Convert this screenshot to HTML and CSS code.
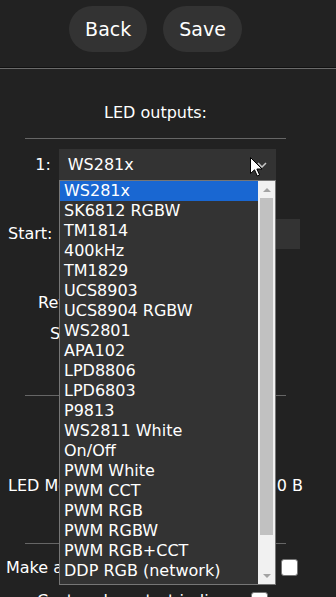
FILE: index.html
```html
<!DOCTYPE html>
<html lang="en">
<head>
    <meta charset="UTF-8">
    <meta name="viewport" content="width=device-width, initial-scale=1.0">
    <title>LED Settings</title>
    <link rel="stylesheet" href="styles.css">
</head>
<body>
    <div class="toprow">
        <div class="bar">
            <button class="btn">Back</button>
            <button class="btn">Save</button>
        </div>
    </div>

    <div class="page">
        <div class="title">LED outputs:</div>
        <hr>
        <div class="bus">
            <span class="num">1:</span>
            <div class="select">
                <span>WS281x</span>
                <svg class="chev" width="10" height="6" viewBox="0 0 10 6">
                    <polyline points="1,1 5,5 9,1" fill="none" stroke="#c8c8c8" stroke-width="1.5"/>
                </svg>
                <svg class="cursor" width="13" height="20" viewBox="0 0 13 20">
                    <path d="M0.5 0.5 L0.5 16.5 L4.5 12.8 L7.3 19 L9.6 18 L6.9 12 L12 12 Z" fill="#fff" stroke="#000" stroke-width="1"/>
                </svg>
            </div>

            <div class="popup">
                <div class="options">
                    <div class="opt active">WS281x</div>
                    <div class="opt">SK6812 RGBW</div>
                    <div class="opt">TM1814</div>
                    <div class="opt">400kHz</div>
                    <div class="opt">TM1829</div>
                    <div class="opt">UCS8903</div>
                    <div class="opt">UCS8904 RGBW</div>
                    <div class="opt">WS2801</div>
                    <div class="opt">APA102</div>
                    <div class="opt">LPD8806</div>
                    <div class="opt">LPD6803</div>
                    <div class="opt">P9813</div>
                    <div class="opt">WS2811 White</div>
                    <div class="opt">On/Off</div>
                    <div class="opt">PWM White</div>
                    <div class="opt">PWM CCT</div>
                    <div class="opt">PWM RGB</div>
                    <div class="opt">PWM RGBW</div>
                    <div class="opt">PWM RGB+CCT</div>
                    <div class="opt">DDP RGB (network)</div>
                </div>
                <div class="scroll">
                    <div class="arrow up"></div>
                    <div class="thumb"></div>
                    <div class="track"></div>
                    <div class="arrow down"></div>
                </div>
            </div>
        </div>

        <div class="start">
            <span>Start:</span>
            <div class="field"></div>
        </div>
        <div class="rev">Reversed:</div>
        <div class="skip">Skip first LEDs:</div>
        <hr class="hr2">
        <div class="mem">
            <span>LED Memory Usage:</span>
            <span>630 B</span>
        </div>
        <hr class="hr3">
        <div class="seg">
            <span>Make a segment for each output:</span>
            <div class="check"></div>
        </div>
        <div class="custom">
            <span>Custom bus start indices:</span>
            <div class="check"></div>
        </div>
    </div>
</body>
</html>
```

FILE: styles.css
```css
body {
    font-family: "DejaVu Sans", Verdana, sans-serif;
    font-size: 16px;
    line-height: 20px;
    background-color: #222;
    color: #fff;
    margin: 0;
    padding: 0;
    overflow: hidden;
}

.toprow {
    position: fixed;
    top: 0;
    left: 0;
    right: 0;
    height: 68px;
    background-color: #222;
    border-bottom: 1px solid #6a6a6a;
    box-shadow: inset 0 -1px 0 #111;
    z-index: 2;
}

.bar {
    width: 311px;
    padding-top: 6px;
    display: flex;
    justify-content: center;
}

.btn {
    font-family: "DejaVu Sans", Verdana, sans-serif;
    font-size: 19px;
    height: 46px;
    padding: 0 16px;
    margin: 0 8px;
    background-color: #333;
    color: #fff;
    border: none;
    border-radius: 23px;
}

.page {
    width: 311px;
    padding-top: 103px;
}

.title {
    text-align: center;
}

hr {
    width: 261px;
    height: 0;
    border: none;
    border-top: 1px solid #666;
    margin: 15px auto 10px;
}

.bus {
    position: relative;
    display: flex;
    justify-content: center;
    align-items: center;
    gap: 8px;
    height: 31px;
}

.select {
    position: relative;
    width: 208px;
    height: 31px;
    padding-left: 9px;
    background-color: #333;
    display: flex;
    align-items: center;
}

.chev {
    position: absolute;
    right: 9px;
    top: 13px;
}

.cursor {
    position: absolute;
    left: 191px;
    top: 8px;
}

.popup {
    position: absolute;
    left: 59px;
    top: 31px;
    width: 215px;
    height: 403px;
    border: 1px solid #767676;
    background-color: #333;
    display: flex;
    z-index: 1;
}

.options {
    flex: 1;
}

.opt {
    height: 20px;
    padding-left: 4px;
    white-space: nowrap;
}

.opt.active {
    background-color: #1967d2;
}

.scroll {
    width: 17px;
    background-color: #f1f1f1;
    display: flex;
    flex-direction: column;
}

.arrow {
    height: 17px;
    display: flex;
    justify-content: center;
    align-items: center;
}

.arrow::after {
    content: "";
    border-left: 4px solid transparent;
    border-right: 4px solid transparent;
}

.arrow.up::after {
    border-bottom: 4px solid #a3a3a3;
}

.arrow.down::after {
    border-top: 4px solid #a3a3a3;
}

.thumb {
    height: 337px;
    margin: 0 2px;
    background-color: #c1c1c1;
}

.track {
    flex: 1;
}

.start {
    display: flex;
    align-items: center;
    height: 30px;
    margin-top: 39px;
    padding-left: 8px;
}

.field {
    width: 120px;
    height: 30px;
    margin-left: auto;
    margin-right: 11px;
    background-color: #333;
}

.rev {
    margin-top: 44px;
    padding-left: 38px;
}

.skip {
    margin-top: 11px;
    padding-left: 50px;
}

.hr2 {
    margin: 51px auto 0;
}

.mem {
    display: flex;
    justify-content: space-between;
    margin-top: 80px;
    padding: 0 8px 0 8px;
}

.hr3 {
    margin: 47px auto 0;
}

.seg {
    display: flex;
    align-items: center;
    height: 19px;
    margin-top: 14px;
    padding: 0 13px 0 6px;
}

.custom {
    display: flex;
    align-items: center;
    height: 19px;
    margin-top: 14px;
    padding: 0 43px 0 37px;
}

.check {
    width: 15px;
    height: 15px;
    margin-left: auto;
    background-color: #fff;
    border: 1px solid #767676;
    border-radius: 3px;
}
```
